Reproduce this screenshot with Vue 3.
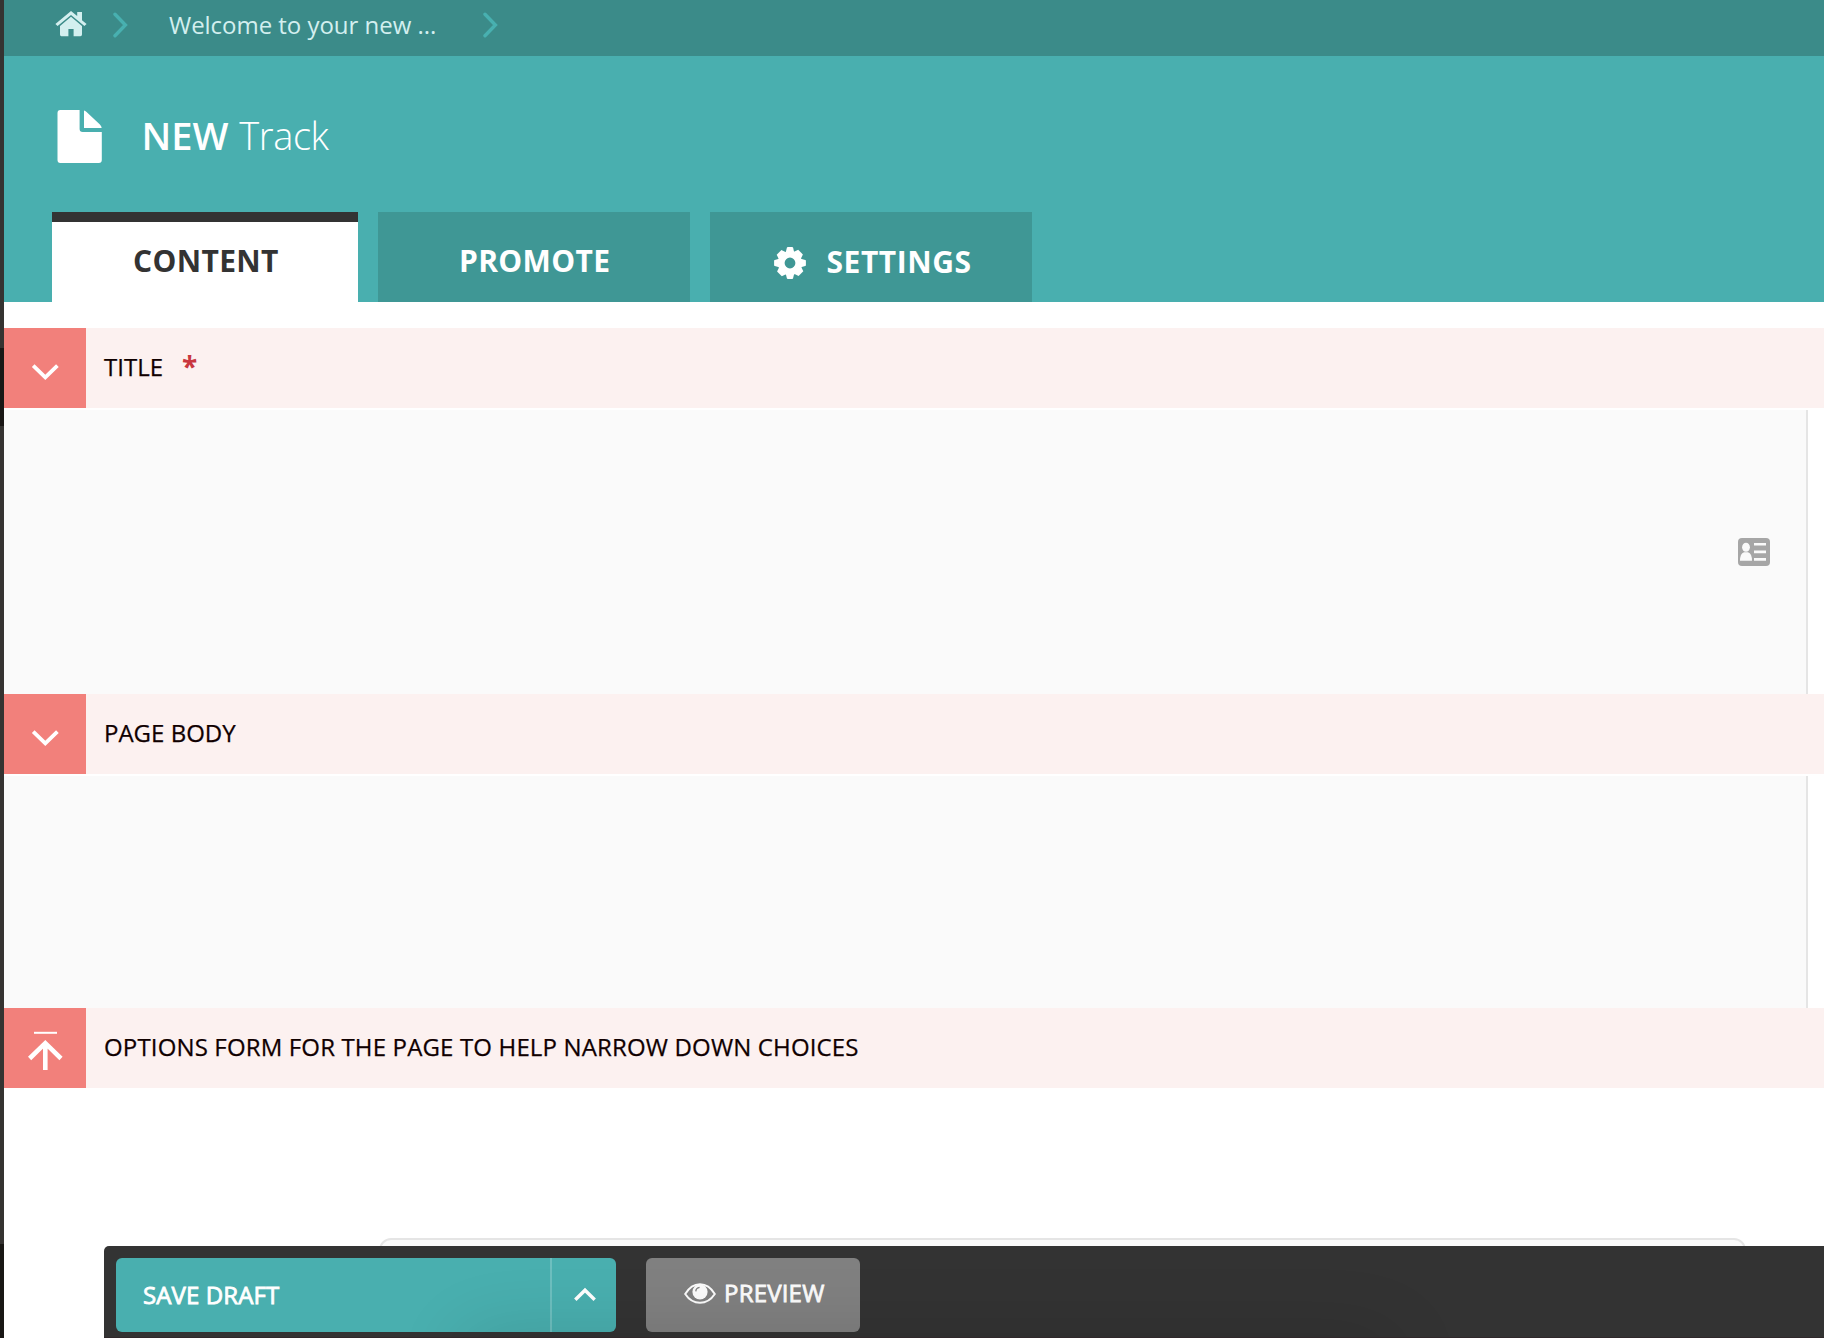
<script setup>
const toothAngles = [0, 90, 180, 270]
</script>

<template>
  <div class="screen">
    <aside class="rail">
      <span class="rail-active"></span>
      <span class="rail-end"></span>
    </aside>

    <main class="page">
      <nav class="crumbs">
        <svg class="home" width="32" height="26" viewBox="0 0 32 26">
          <path d="M16 0 22.2 5V1H27v8.2L31.6 13 29.4 15.1 16 3.9 2.6 15.1.4 13Z" />
          <path d="M16 5.8 27 15v8.6Q27 25.2 25.4 25.2H18.6V18h-5.2v7.2H6.4Q5 25.2 5 23.6V15Z" />
        </svg>
        <svg class="crumb-arrow first" width="16" height="26" viewBox="0 0 16 26">
          <path d="M2 2.3 12.4 13 2 23.7" />
        </svg>
        <span class="crumb-text">Welcome to your new ...</span>
        <svg class="crumb-arrow last" width="16" height="26" viewBox="0 0 16 26">
          <path d="M2 2.3 12.4 13 2 23.7" />
        </svg>
      </nav>

      <header class="head">
        <div class="heading">
          <svg class="file" width="45" height="53" viewBox="0 0 45 53">
            <path d="M3.3 0H22.6V19Q22.6 22 25.6 22H44.8V50Q44.8 53 41.8 53H3.3Q.5 53 .5 50V3Q.5 0 3.3 0Z" />
            <path d="M27 .4Q28.3 .7 29.3 1.7L42.9 14.6Q44.5 16.2 44.7 18H27Z" />
          </svg>
          <h1 class="title"><b>NEW</b> <span>Track</span></h1>
        </div>
        <div class="tabs">
          <a class="tab content active">CONTENT</a>
          <a class="tab promote">PROMOTE</a>
          <a class="tab settings">
            <svg width="32" height="32" viewBox="-16 -16 32 32">
              <circle r="8.7" />
              <g v-for="a in toothAngles" :key="a" :transform="`rotate(${a})`">
                <path d="M-4.4-10-3.1-15.2Q-2.9-15.9-2.2-15.9H2.2Q2.9-15.9 3.1-15.2L4.4-10Z" />
                <path d="M3.5-11 8.2-13.3 12.9-8.6 10.7-4Z" />
              </g>
            </svg>
            <span>SETTINGS</span>
          </a>
        </div>
      </header>

      <section class="field">
        <div class="bar">
          <button class="toggle">
            <svg width="82" height="80" viewBox="0 0 82 80"><path class="down" d="M29.2 37.7 41.3 49.4 53.4 37.7" /></svg>
          </button>
          <h2>TITLE</h2><b class="star">*</b>
        </div>
        <div class="panel title-panel">
          <svg width="32" height="28" viewBox="0 0 32 28">
            <rect width="32" height="28" rx="4" fill="#a6a6a6" />
            <g fill="#fafafa">
              <ellipse cx="8" cy="9.3" rx="3.9" ry="4.5" />
              <path d="M2 22.7Q2 15.6 6 14.2H10Q14 15.6 14 22.7Z" />
              <path d="M16 5H28V7.6H16ZM16 12.6H28V15.2H16ZM16 20H28V22.8H16Z" />
            </g>
          </svg>
        </div>
      </section>

      <section class="field">
        <div class="bar">
          <button class="toggle">
            <svg width="82" height="80" viewBox="0 0 82 80"><path class="down" d="M29.2 37.7 41.3 49.4 53.4 37.7" /></svg>
          </button>
          <h2>PAGE BODY</h2>
        </div>
        <div class="panel body-panel"></div>
      </section>

      <section class="field">
        <div class="bar">
          <button class="toggle">
            <svg width="82" height="80" viewBox="0 0 82 80">
              <path d="M30 24.8H53" stroke-width="2" />
              <path d="M41.3 62V36M25.6 50.5 41.3 35.2 57 50.5" stroke-width="4.6" />
            </svg>
          </button>
          <h2 class="wide">OPTIONS FORM FOR THE PAGE TO HELP NARROW DOWN CHOICES</h2>
        </div>
        <div class="choices"></div>
      </section>

      <footer class="actions">
        <div class="save">
          <button class="save-main">SAVE DRAFT</button>
          <button class="save-more">
            <svg width="24" height="16" viewBox="0 0 24 16"><path d="M2.3 12.8 12 3.2 21.7 12.8" /></svg>
          </button>
        </div>
        <button class="preview">
          <svg width="32" height="22" viewBox="0 0 32 22">
            <path d="M1.2 11Q7 1.2 16 1.2T30.8 11Q25 19.8 16 19.8T1.2 11Z" fill="none" stroke="#fbfbfb" stroke-width="2" />
            <circle cx="16" cy="8.8" r="7.6" fill="#fbfbfb" />
            <path d="M11.8 8.4Q12 4.8 15.6 4.3" fill="none" stroke="#808080" stroke-width="1.3" />
          </svg>
          <span>PREVIEW</span>
        </button>
      </footer>
    </main>
  </div>
</template>

<style>
body {
  margin: 0;
  background: #fff;
}
</style>

<style scoped>
.screen {
  display: flex;
  position: relative;
  width: 1824px;
  height: 1338px;
  overflow: hidden;
  font-family: "Open Sans", "Noto Sans", sans-serif;
  font-size: 24px;
  color: #100000;
}
.rail {
  display: flex;
  flex-direction: column;
  flex: 0 0 4px;
  background: #353331;
}
.rail-active {
  height: 78px;
  margin-top: 348px;
  background: #191715;
}
.rail-end {
  height: 94px;
  margin-top: auto;
  background: #191715;
}
.page {
  flex: 1;
  min-width: 0;
}
svg {
  display: block;
  flex: none;
}
button {
  margin: 0;
  padding: 0;
  border: 0;
  font: inherit;
  color: inherit;
  background: none;
}

.crumbs {
  display: flex;
  align-items: flex-start;
  height: 56px;
  background: #3b8b89;
}
.home {
  margin: 11px 0 0 51px;
  fill: #d3efef;
}
.crumb-arrow {
  margin-top: 12px;
  fill: none;
  stroke: #48b0b0;
  stroke-width: 3.4;
  stroke-linecap: round;
}
.crumb-arrow.first {
  margin-left: 26px;
}
.crumb-text {
  width: 268px;
  margin-left: 40px;
  line-height: 49px;
  white-space: nowrap;
  letter-spacing: -0.03px;
  color: #d3efef;
}
.crumb-arrow.last {
  margin-left: 46px;
}

.head {
  display: flex;
  flex-direction: column;
  justify-content: space-between;
  height: 246px;
  background: #49afaf;
}
.heading {
  display: flex;
  padding: 54px 0 0 53px;
}
.file {
  fill: #fff;
}
.title {
  margin: 0 0 0 39.5px;
  font-size: 38px;
  line-height: 50px;
  font-weight: 300;
  color: #fff;
}
.title b {
  font-weight: 600;
}
.title span {
  margin-left: 1px;
  letter-spacing: -0.4px;
}
.tabs {
  display: flex;
  gap: 20px;
  padding-left: 48px;
}
.tab {
  box-sizing: border-box;
  display: flex;
  height: 90px;
  padding-top: 3px;
  font-size: 30px;
  font-weight: 700;
  line-height: 91px;
  letter-spacing: 0.35px;
  color: #fff;
  background: #3f9795;
}
.tab.content {
  width: 306px;
  padding-left: 81px;
}
.tab.promote {
  width: 312px;
  padding-left: 81px;
}
.tab.settings {
  width: 322px;
  padding: 4px 0 0 64px;
}
.tab.settings span {
  margin-left: 20.5px;
  letter-spacing: 0.55px;
}
.tab.settings svg {
  margin-top: 31px;
  fill: #fff;
}
.tab.settings circle {
  fill: none;
  stroke: #fff;
  stroke-width: 6.6;
}
.tab.active {
  border-top: 10px solid #333;
  padding-top: 0;
  line-height: 77px;
  color: #333;
  background: #fff;
}

.field:first-of-type {
  margin-top: 26px;
}
.bar {
  display: flex;
  height: 80px;
  background: #fcf1f0;
}
.toggle {
  width: 82px;
  background: #f2807b;
}
.toggle path {
  fill: none;
  stroke: #fff;
}
.toggle .down {
  stroke-width: 3.8;
}
.bar h2 {
  margin: 0 0 0 18px;
  font-size: 24px;
  font-weight: 400;
  line-height: 77px;
  -webkit-text-stroke: 0.25px #100000;
}
.bar h2.wide {
  letter-spacing: 0.15px;
}
.star {
  margin-left: 19px;
  font-size: 28px;
  line-height: 77px;
  color: #c9373f;
}
.panel {
  box-sizing: border-box;
  width: 1804px;
  margin-top: 2px;
  border-right: 2px solid #e5e5e5;
  background: #fafafa;
}
.title-panel {
  display: flex;
  justify-content: flex-end;
  align-items: center;
  height: 284px;
  padding-right: 36px;
}
.body-panel {
  height: 232px;
}
.choices {
  box-sizing: border-box;
  width: 1367px;
  height: 120px;
  margin: 150px 0 0 375px;
  border: 2px solid #e5e5e5;
  border-radius: 12px;
  background: #fafafa;
}

/* Fixed action bar over the form */
.actions {
  box-sizing: border-box;
  position: absolute;
  left: 104px;
  right: 0;
  bottom: 0;
  display: flex;
  gap: 30px;
  height: 92px;
  padding: 12px;
  border-top-left-radius: 5px;
  border-bottom: 1px solid #30282b;
  overflow: hidden;
  color: #fff;
  background: #333;
}
.actions::after {
  content: "";
  position: absolute;
  left: 380px;
  right: 450px;
  bottom: -40px;
  height: 20px;
  border-radius: 10px;
  box-shadow: 0 0 70px 24px rgba(0, 0, 0, 0.13);
}
.save {
  display: flex;
  width: 500px;
  height: 74px;
  border-radius: 6px;
  overflow: hidden;
  background: #49afaf;
}
.save-main {
  width: 434px;
  padding-left: 27px;
  text-align: left;
  line-height: 74px;
  letter-spacing: 0.1px;
  -webkit-text-stroke: 0.8px #fff;
}
.save-more {
  width: 66px;
  box-sizing: border-box;
  padding-left: 20.5px;
  border-left: 2px solid #6dbfbf;
}
.save-more path {
  fill: none;
  stroke: #fff;
  stroke-width: 3.4;
}
.preview {
  display: flex;
  width: 214px;
  height: 74px;
  border-radius: 6px;
  color: #fbfbfb;
  background: #808080;
}
.preview svg {
  margin: 25px 0 0 38px;
}
.preview span {
  margin-left: 8px;
  line-height: 69px;
  letter-spacing: 0.2px;
  -webkit-text-stroke: 0.8px #fbfbfb;
}
</style>
